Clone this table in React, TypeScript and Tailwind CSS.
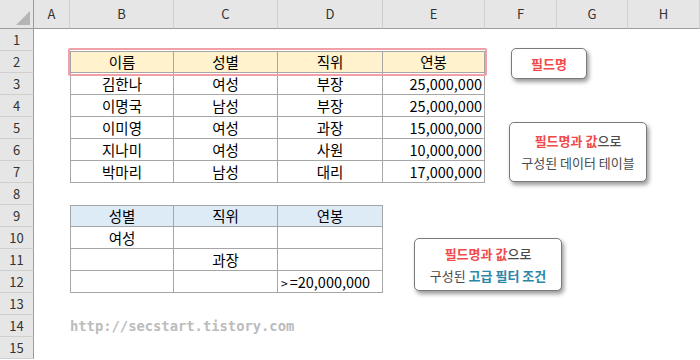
const cols = ['A', 'B', 'C', 'D', 'E', 'F', 'G', 'H'];
const widths = ['w-[36px]', 'w-[104px]', 'w-[104px]', 'w-[105px]', 'w-[102px]', 'w-[72px]', 'w-[71px]', 'flex-1'];

type Cell = { text: string; align: 'center' | 'right' | 'left'; head?: 'yellow' | 'blue' };

const table1: string[][] = [
  ['이름', '성별', '직위', '연봉'],
  ['김한나', '여성', '부장', '25,000,000'],
  ['이명국', '남성', '부장', '25,000,000'],
  ['이미영', '여성', '과장', '15,000,000'],
  ['지나미', '여성', '사원', '10,000,000'],
  ['박마리', '남성', '대리', '17,000,000'],
];

const table2: string[][] = [
  ['성별', '직위', '연봉'],
  ['여성', '', ''],
  ['', '과장', ''],
  ['', '', '>=20,000,000'],
];

function cellsFor(row: number): (Cell | null)[] {
  const out: (Cell | null)[] = Array(8).fill(null);
  if (row >= 2 && row <= 7) {
    table1[row - 2].forEach((t, i) => {
      out[i + 1] = {
        text: t,
        align: row > 2 && i === 3 ? 'right' : 'center',
        head: row === 2 ? 'yellow' : undefined,
      };
    });
  }
  if (row >= 9 && row <= 12) {
    table2[row - 9].forEach((t, i) => {
      out[i + 1] = {
        text: t,
        align: row === 12 && i === 2 ? 'left' : 'center',
        head: row === 9 ? 'blue' : undefined,
      };
    });
  }
  return out;
}

function CellText({ text }: { text: string }) {
  if (text.startsWith('>=')) {
    return (
      <span className="pt-[1px]">
        <span className="text-[12px]">&gt;</span>
        <span className="ml-[2px]">{text.slice(1)}</span>
      </span>
    );
  }
  return <span className="pt-[1px]">{text}</span>;
}

function SheetRow({ row }: { row: number }) {
  const cells = cellsFor(row);
  const prev = row > 1 ? cellsFor(row - 1) : Array(8).fill(null);
  return (
    <div className="flex h-[22px]">
      <div className="flex w-[34px] items-center justify-center border-r border-b border-r-[#9c9c9c] border-b-[#cfcfcf] bg-[#e6e6e6] text-[13px] text-[#333]">
        {row}
      </div>
      {cells.map((c, i) => {
        if (!c) return <div key={i} className={`${widths[i]} h-full`} />;
        const cls = [
          widths[i],
          'flex h-full items-center border-r border-b border-[#a6a6a6] text-[14.5px] leading-none text-black',
          i === 1 ? 'border-l' : '',
          !prev[i] ? 'border-t' : '',
          c.head === 'yellow' ? 'bg-[#fff2cc]' : '',
          c.head === 'blue' ? 'bg-[#ddebf7]' : '',
          c.align === 'center' ? 'justify-center' : '',
          c.align === 'right' ? 'justify-end pr-[2px]' : '',
          c.align === 'left' ? 'justify-start pl-[3px]' : '',
        ].join(' ');
        return (
          <div key={i} className={cls}>
            <CellText text={c.text} />
          </div>
        );
      })}
    </div>
  );
}

function Callout({ className, children }: { className: string; children: React.ReactNode }) {
  return (
    <div
      className={`absolute flex flex-col items-center justify-center rounded-[5px] border-[1.5px] border-[#7a7a7a] bg-white text-[13px] leading-[22px] text-[#4a4a4a] shadow-[2px_3px_4px_rgba(0,0,0,0.4)] ${className}`}
    >
      {children}
    </div>
  );
}

export default function App() {
  const rows = Array.from({ length: 15 }, (_, i) => i + 1);
  return (
    <div className="relative h-[360px] w-[700px] overflow-hidden bg-white font-['Noto_Sans_CJK_KR','Noto_Sans',sans-serif]">
      <div className="flex h-[29px]">
        <div className="relative w-[34px] border-r border-b border-r-[#9c9c9c] border-b-[#9c9c9c] bg-[#e6e6e6]">
          <svg className="absolute right-[3px] bottom-[3px]" width="14" height="14" viewBox="0 0 14 14">
            <polygon points="14,0 14,14 0,14" fill="#b5b5b5" />
          </svg>
        </div>
        {cols.map((c, i) => (
          <div
            key={c}
            className={`${widths[i]} flex items-center justify-center border-r border-b border-r-[#cfcfcf] border-b-[#9c9c9c] bg-[#e6e6e6] text-[13px] text-[#333]`}
          >
            {c}
          </div>
        ))}
      </div>
      {rows.map((r) => (
        <SheetRow key={r} row={r} />
      ))}

      <div className="pointer-events-none absolute top-[48px] left-[68px] h-[28px] w-[419px] rounded-[2px] border-2 border-[#f2a0a8]" />

      <Callout className="top-[48px] left-[511px] h-[31px] w-[76px]">
        <span className="font-semibold text-[#f04a4a]">필드명</span>
      </Callout>

      <Callout className="top-[122px] left-[509px] h-[60px] w-[138px]">
        <span className="font-medium">
          <span className="font-semibold text-[#f04a4a]">필드명과 값</span>
          <span>으로</span>
        </span>
        <span>구성된 데이터 테이블</span>
      </Callout>

      <Callout className="top-[238px] left-[414px] h-[53px] w-[148px]">
        <span className="font-medium">
          <span className="font-semibold text-[#f04a4a]">필드명과 값</span>
          <span>으로</span>
        </span>
        <span>
          구성된 <span className="font-semibold text-[#2b87a8]">고급 필터 조건</span>
        </span>
      </Callout>

      <div className="absolute top-[316px] left-[70px] font-['DejaVu_Sans_Mono',monospace] text-[13.8px] leading-[20px] font-bold text-[#bcbcbc]">
        http://secstart.tistory.com
      </div>
    </div>
  );
}
